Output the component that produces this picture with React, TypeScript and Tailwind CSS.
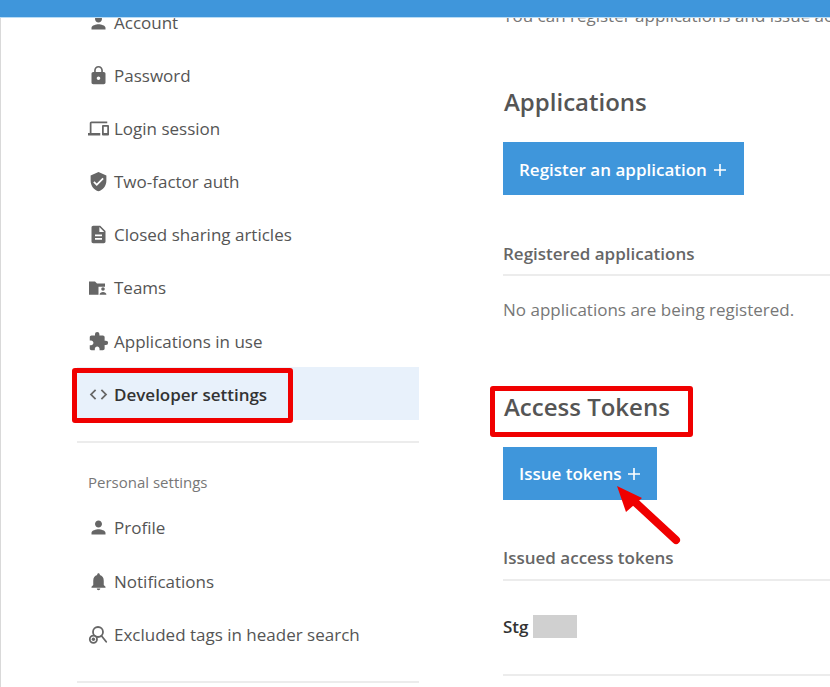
import React from "react";
import { MdPerson, MdLock, MdDevices, MdVerifiedUser, MdDescription, MdExtension, MdCode, MdNotifications } from "react-icons/md";

function TeamsIcon() {
  return (
    <svg viewBox="0 0 20 20" className="w-[20px] h-[20px]" fill="#666">
      <path d="M1 3.5h6l2 2h8v3.2h-6.5v8H1z" />
      <circle cx="15" cy="11" r="1.8" />
      <path d="M11.6 16.8c0-1.8 1.7-2.8 3.4-2.8s3.4 1 3.4 2.8z" />
    </svg>
  );
}

function ExcludedIcon() {
  return (
    <svg viewBox="0 0 20 20" className="w-[20px] h-[20px]" fill="none" stroke="#666" strokeWidth="1.8">
      <circle cx="10" cy="7" r="5" />
      <path d="M13.4 10.8l4.8 6" strokeLinecap="round" />
      <circle cx="5.4" cy="14.2" r="3.6" fill="#fff" />
      <circle cx="5.4" cy="14.2" r="1.7" fill="#666" stroke="none" />
    </svg>
  );
}

function Plus() {
  return (
    <svg width="12" height="12" viewBox="0 0 12 12" stroke="#fff" strokeWidth="1.6">
      <path d="M6 0v12M0 6h12" />
    </svg>
  );
}

function NavRow({ icon, label, active, low }: { icon: React.ReactNode; label: string; active?: boolean; low?: boolean }) {
  return (
    <div className={`flex items-center h-[53px] pl-[11px] ${low ? "pt-[2px]" : ""} ${active ? "bg-[#e8f1fb] text-[#333] font-semibold" : "text-[#555]"}`}>
      <span className="w-[26px] flex-none flex items-center text-[#666]">{icon}</span>
      <span className="text-[17px] leading-none">{label}</span>
    </div>
  );
}

export default function App() {
  return (
    <div className="relative w-[830px] h-[687px] overflow-hidden bg-white flex flex-col font-['Open_Sans',sans-serif]">
      <div className="flex-none h-[18px] bg-[#3f96db] border-b border-[#b9dcf5] z-10" />
      <div className="flex-1 flex min-h-0 overflow-hidden border-l border-[#d9d9d9] pl-[76px]">
        <aside className="w-[342px] flex-none -mt-[22px] flex flex-col">
          <NavRow icon={<MdPerson size={21} />} label="Account" />
          <NavRow icon={<MdLock size={21} />} label="Password" />
          <NavRow icon={<MdDevices size={21} />} label="Login session" />
          <NavRow icon={<MdVerifiedUser size={21} />} label="Two-factor auth" />
          <NavRow icon={<MdDescription size={21} />} label="Closed sharing articles" />
          <NavRow icon={<TeamsIcon />} label="Teams" />
          <NavRow low icon={<MdExtension size={21} />} label="Applications in use" />
          <NavRow low active icon={<MdCode size={21} />} label="Developer settings" />
          <div className="mt-[21px] border-t-2 border-[#ececec]" />
          <div className="mt-[29px] pl-[11px] text-[15px] leading-[20px] text-[#777]">Personal settings</div>
          <div className="mt-[9px] flex flex-col">
            <NavRow icon={<MdPerson size={21} />} label="Profile" />
            <NavRow low icon={<MdNotifications size={21} />} label="Notifications" />
            <NavRow low icon={<ExcludedIcon />} label="Excluded tags in header search" />
          </div>
          <div className="mt-[21px] border-t-2 border-[#ececec]" />
        </aside>
        <main className="flex-1 min-w-0 ml-[84px] -mt-[14px] overflow-hidden">
          <p className="text-[17px] leading-[24px] text-[#777] whitespace-nowrap">You can register applications and issue access tokens</p>
          <h2 className="mt-[56px] pl-px text-[24px] leading-[36px] font-[550] text-[#555]">Applications</h2>
          <div className="mt-[22px] flex w-fit items-center h-[53px] pt-[2px] pl-[16px] pr-[18px] gap-[7px] bg-[#3f96db] text-white text-[17px] font-semibold">Register an application <Plus /></div>
          <h3 className="mt-[47px] text-[17px] leading-[24px] font-semibold text-[#666]">Registered applications</h3>
          <div className="mt-[8px] border-t-2 border-[#ececec]" />
          <p className="mt-[22px] text-[17px] leading-[24px] text-[#777]">No applications are being registered.</p>
          <h2 className="mt-[67px] pl-px text-[24px] leading-[36px] font-[550] text-[#555]">Access Tokens</h2>
          <div className="mt-[22px] flex w-fit items-center h-[53px] pt-[1px] pl-[16px] pr-[17px] gap-[7px] bg-[#3f96db] text-white text-[17px] font-semibold">Issue tokens <Plus /></div>
          <h3 className="mt-[46px] text-[17px] leading-[24px] font-semibold text-[#666]">Issued access tokens</h3>
          <div className="mt-[9px] border-t-2 border-[#ececec]" />
          <div className="mt-[34px] flex items-center h-[23px] text-[17px] font-semibold text-[#333]">Stg<span className="ml-[4px] w-[44px] h-[23px] bg-[#d0d0d0]" /></div>
          <div className="mt-[36px] border-t-2 border-[#ececec]" />
        </main>
      </div>
      <div className="absolute left-[72px] top-[368px] w-[221px] h-[55px] border-[5px] border-[#f00000] rounded-[3px]" />
      <div className="absolute left-[490px] top-[386px] w-[203px] h-[51px] border-[5px] border-[#f00000] rounded-[3px]" />
      <svg className="absolute left-[610px] top-[480px]" width="80" height="70" viewBox="0 0 80 70">
        <path d="M66 60L26 23" stroke="#f00000" strokeWidth="8" strokeLinecap="round" />
        <path d="M7 6L32 18L16 32Z" fill="#f00000" />
      </svg>
    </div>
  );
}
